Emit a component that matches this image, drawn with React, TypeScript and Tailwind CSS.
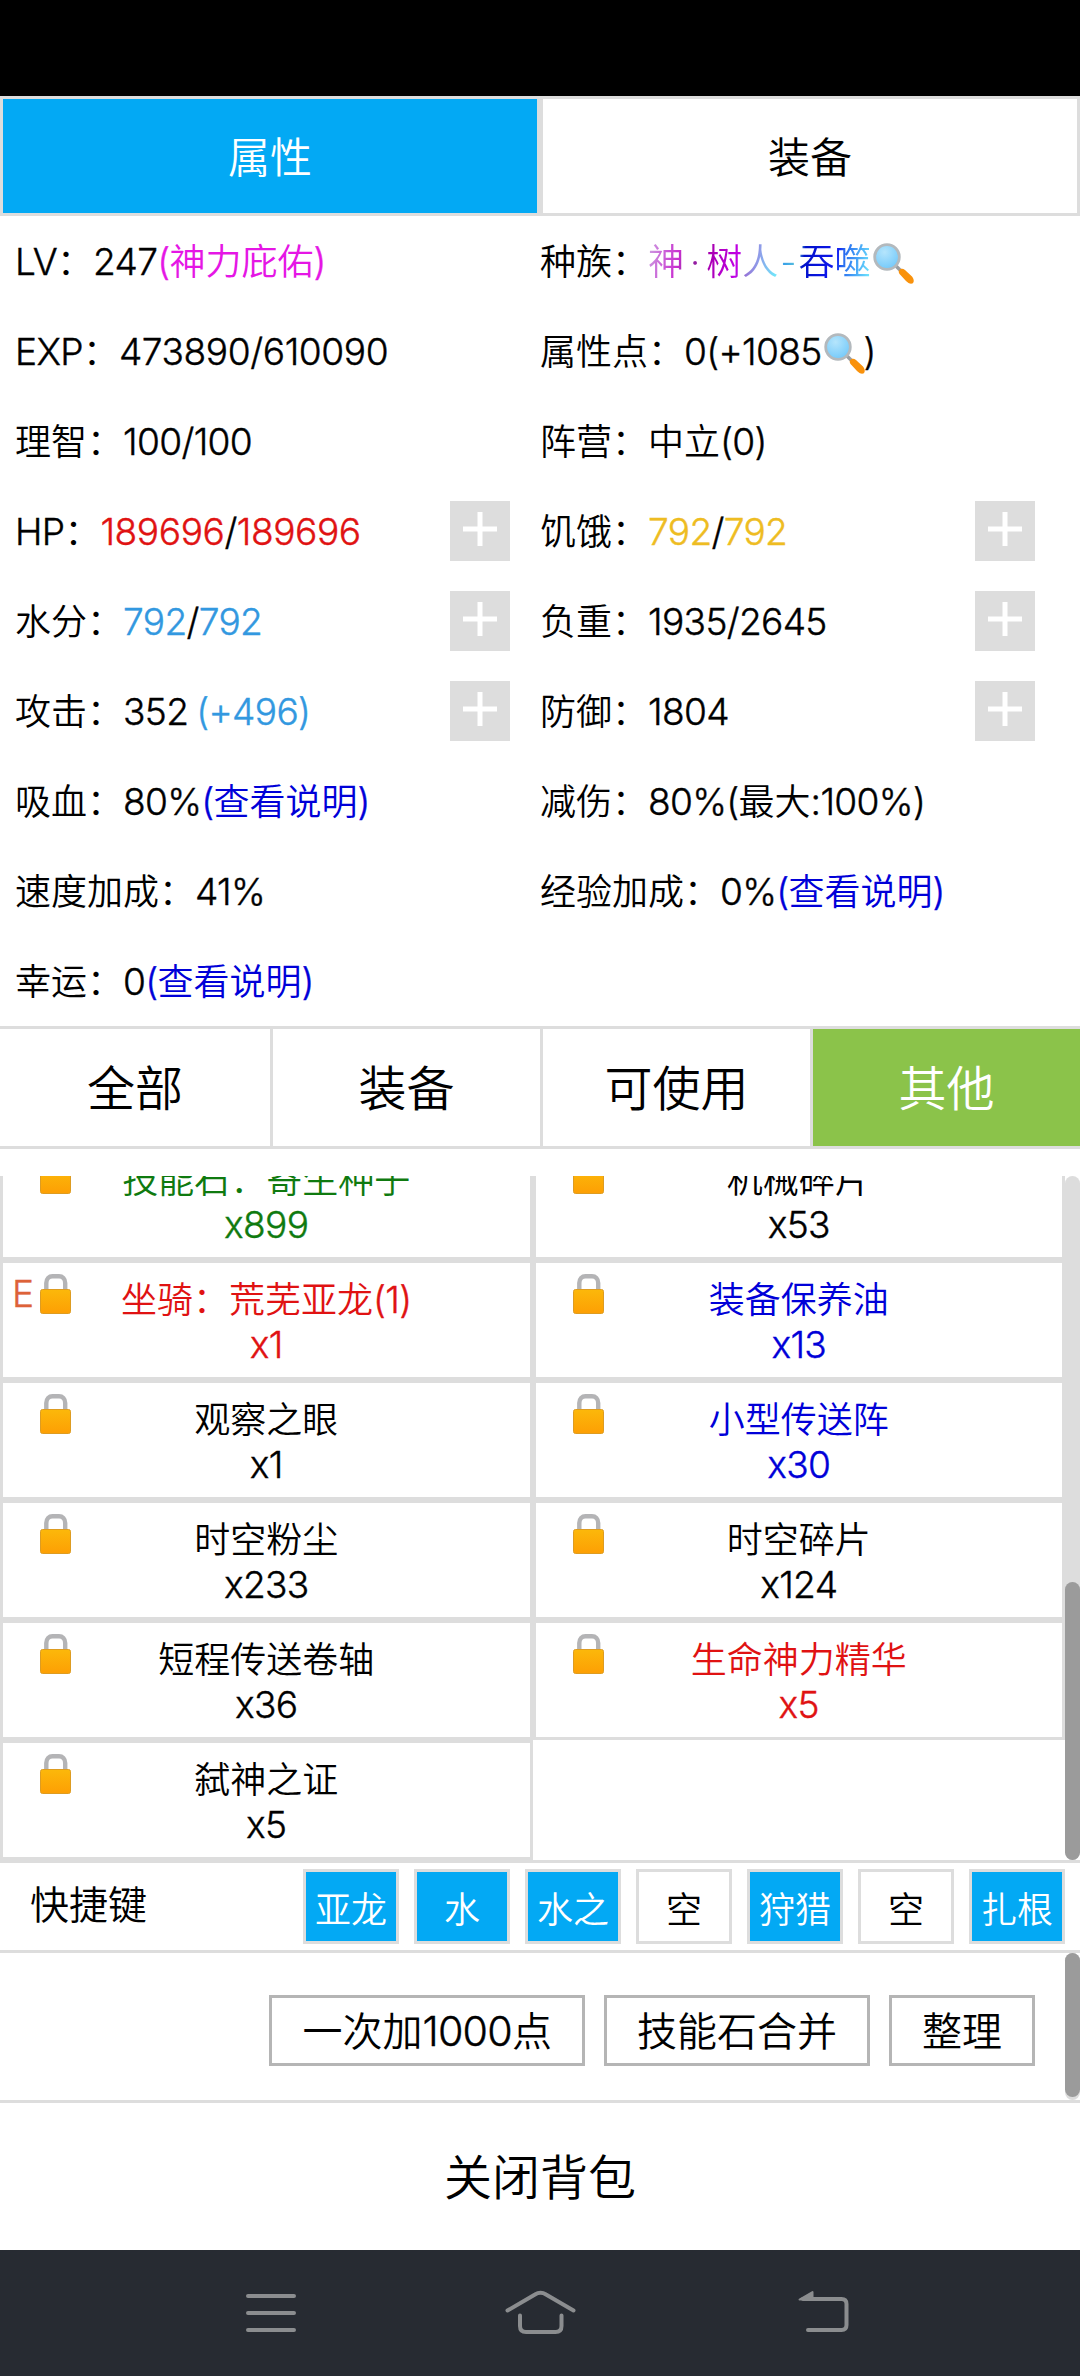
import React from "react";

/** Splits a string so that Latin letters and digits use a narrower geometric face. */
function T({ children, wide }: { children: string; wide?: boolean }) {
  const parts = children.split(/([\x21-\x7e]+)/).filter(Boolean);
  return (
    <>
      {parts.map((p, i) =>
        /^[\x21-\x7e]+$/.test(p) ? (
          <span
            key={i}
            className={`font-[Inter,sans-serif] text-[1.03em] leading-none font-[330] [-webkit-text-stroke:0.4px] ${wide ? "tracking-[-0.011em]" : "tracking-[-0.018em]"}`}
          >
            {p}
          </span>
        ) : (
          <React.Fragment key={i}>{p}</React.Fragment>
        ),
      )}
    </>
  );
}

function Magnifier() {
  return (
    <svg className="-mt-4 -mr-0.5 inline-block h-[42px] w-[44px] align-[-9px]" viewBox="0 0 44 42">
      <defs>
        <radialGradient id="lens" cx="0.4" cy="0.3" r="0.8">
          <stop offset="0" stopColor="#b5e5fc" />
          <stop offset="1" stopColor="#6cc6fa" />
        </radialGradient>
      </defs>
      <path d="M25 24L30 29" stroke="#9a9fa3" strokeWidth="3.5" />
      <path d="M28 28.5C29.500 26.500 31.500 26 34 28L41 34.500C43 37 43.500 40 41.500 41.500C39 42 37 41 35 39L29.500 33C28 31.500 27.300 30 28 28.500Z" fill="#f9920c" />
      <circle cx="16" cy="15" r="12.300" fill="url(#lens)" stroke="#b3b9bd" strokeWidth="2.800" />
    </svg>
  );
}

function Lock() {
  return (
    <svg className="absolute left-[37px] top-[11px] h-10 w-8" viewBox="0 0 32 40">
      <defs>
        <linearGradient id="lockBody" x1="0" y1="0" x2="0" y2="1">
          <stop offset="0" stopColor="#fcb80a" />
          <stop offset="1" stopColor="#fd9f04" />
        </linearGradient>
      </defs>
      <path d="M6.300 18V9C6.300 4.500 9 2.300 12.500 2.300H19C22.500 2.300 25.200 4.500 25.200 9V18" fill="none" stroke="#b4b4b6" strokeWidth="4.400" />
      <rect x="0.500" y="15.500" width="30" height="24" rx="2" fill="url(#lockBody)" stroke="#dd9c22" strokeWidth="1" />
    </svg>
  );
}

function Plus() {
  return (
    <div className="mr-[30px] flex size-[60px] shrink-0 items-center justify-center bg-[#ddd]">
      <svg className="mb-1 size-[34px]" viewBox="0 0 34 34">
        <path d="M17 0V34M0 17H34" stroke="#fff" strokeWidth="5" />
      </svg>
    </div>
  );
}

function Stat({ label, plus, children }: { label: string; plus?: boolean; children?: React.ReactNode }) {
  return (
    <div className="flex h-[90px] items-center justify-between whitespace-nowrap text-[36px] leading-[54px]">
      <div className="pb-[5px]">
        <T>{label}</T>：{children}
      </div>
      {plus && <Plus />}
    </div>
  );
}

const Link = () => (
  <span className="text-[#0000d8]">
    <T>(查看说明)</T>
  </span>
);

function Stats() {
  return (
    <div className="grid grid-cols-[525px_525px] pl-[15px]">
      <Stat label="LV">
        <T>247</T>
        <span className="text-[#e516e5]"><T>(神力庇佑)</T></span>
      </Stat>
      <Stat label="种族">
        <span className="bg-[linear-gradient(100deg,#cda5e2_0%,#c92fd0_15%,#8a2a9a_20%,#a800b0_28%,#c200e8_41%,#9860cf_43%,#8ea0ea_50%,#70e6fa_58%,#38a0e8_61%,#58c0dc_66%,#0010c8_69%,#1018f0_83%,#2468f0_86%,#78f4ff_100%)] bg-clip-text text-transparent">
          神<span className="px-[6px] font-[Inter,sans-serif] leading-none">·</span>树人<span className="px-[2px] font-[Inter,sans-serif] leading-none">-</span>吞噬
        </span>
        <Magnifier />
      </Stat>
      <Stat label="EXP"><T wide>473890/610090</T></Stat>
      <Stat label="属性点">
        <T>0(+1085</T>
        <Magnifier />
        <T>)</T>
      </Stat>
      <Stat label="理智"><T>100/100</T></Stat>
      <Stat label="阵营"><T>中立(0)</T></Stat>
      <Stat label="HP" plus>
        <span className="text-[#e01212]"><T wide>189696</T></span>
        <T>/</T>
        <span className="text-[#e01212]"><T wide>189696</T></span>
      </Stat>
      <Stat label="饥饿" plus>
        <span className="text-[#eebc22]"><T>792</T></span>
        <T>/</T>
        <span className="text-[#eebc22]"><T>792</T></span>
      </Stat>
      <Stat label="水分" plus>
        <span className="text-[#3298e0]"><T>792</T></span>
        <T>/</T>
        <span className="text-[#3298e0]"><T>792</T></span>
      </Stat>
      <Stat label="负重" plus><T>1935/2645</T></Stat>
      <Stat label="攻击" plus>
        <T>352</T> <span className="text-[#3298e0]"><T>(+496)</T></span>
      </Stat>
      <Stat label="防御" plus><T>1804</T></Stat>
      <Stat label="吸血"><T>80%</T><Link /></Stat>
      <Stat label="减伤"><T>80%(最大:100%)</T></Stat>
      <Stat label="速度加成"><T>41%</T></Stat>
      <Stat label="经验加成"><T>0%</T><Link /></Stat>
      <Stat label="幸运"><T>0</T><Link /></Stat>
    </div>
  );
}

type Item = { name: string; count: string; color?: string; equipped?: boolean };

const items: Item[] = [
  { name: "技能石：寄生种子", count: "x899", color: "text-[#0f7a0f]" },
  { name: "机械碎片", count: "x53" },
  { name: "坐骑：荒芜亚龙(1)", count: "x1", color: "text-[#e01212]", equipped: true },
  { name: "装备保养油", count: "x13", color: "text-[#0000d8]" },
  { name: "观察之眼", count: "x1" },
  { name: "小型传送阵", count: "x30", color: "text-[#0000d8]" },
  { name: "时空粉尘", count: "x233" },
  { name: "时空碎片", count: "x124" },
  { name: "短程传送卷轴", count: "x36" },
  { name: "生命神力精华", count: "x5", color: "text-[#e01212]" },
  { name: "弑神之证", count: "x5" },
];

function ItemCell({ item }: { item: Item }) {
  return (
    <div className={`relative h-[120px] border-3 border-[#ddd] pt-[12px] text-center text-[36px] leading-[45px] ${item.color ?? ""}`}>
      {item.equipped && (
        <span className="absolute left-[9px] top-[6px] leading-[45px] text-[#dd6238]">
          <T>E</T>
        </span>
      )}
      <Lock />
      <div><T>{item.name}</T></div>
      <div><T>{item.count}</T></div>
    </div>
  );
}

const filters = ["全部", "装备", "可使用", "其他"];
const shortcuts = ["亚龙", "水", "水之", "空", "狩猎", "空", "扎根"];
const actions = ["一次加1000点", "技能石合并", "整理"];

export default function App() {
  return (
    <div className="flex h-[2376px] w-[1080px] flex-col overflow-hidden bg-white font-['Noto_Sans_CJK_SC',sans-serif] font-[350] text-black">
      <div className="h-24 bg-black" />

      <div className="grid h-[120px] grid-cols-2 text-[42px]">
        <div className="flex items-center justify-center border-3 border-[#ddd] bg-[#03a9f4] pb-1 text-white">属性</div>
        <div className="flex items-center justify-center border-3 border-[#ddd] pb-1">装备</div>
      </div>

      <Stats />

      <div className="grid h-[123px] grid-cols-4 border-y-3 border-[#ddd] text-[48px]">
        {filters.map((f, i) => (
          <div
            key={f}
            className={`flex items-center justify-center border-[#ddd] pb-1.5 ${i > 0 ? "border-l-3" : ""} ${i === 3 ? "bg-[#8bc34a] text-white" : ""}`}
          >
            {f}
          </div>
        ))}
      </div>

      <div className="mt-[27px] flex h-[684px] overflow-hidden">
        <div className="-mt-9 grid w-[1065px] grid-cols-2 content-start">
          {items.map((it) => (
            <ItemCell key={it.name} item={it} />
          ))}
        </div>
        <div className="flex w-[15px] flex-col justify-end rounded-full bg-[#ddd]">
          <div className="h-[278px] rounded-full bg-[#9b9b9b]" />
        </div>
      </div>

      <div className="flex h-[93px] items-center justify-between border-y-3 border-[#ddd] pl-[30px] pr-[15px]">
        <div className="pb-2 text-[39px]">快捷键</div>
        <div className="flex gap-[15px]">
          {shortcuts.map((s, i) => (
            <div
              key={i}
              className={`flex h-[75px] w-24 items-center justify-center border-3 border-[#ddd] text-[36px] ${s === "空" ? "" : "bg-[#03a9f4] text-white"}`}
            >
              {s}
            </div>
          ))}
        </div>
      </div>

      <div className="flex h-[147px] justify-between">
        <div className="flex flex-1 items-start justify-end gap-[19px] pr-[30px] pt-[42px]">
          {actions.map((a) => (
            <div key={a} className="flex h-[71px] items-center border-3 border-[#b5b5b5] px-[30px] pb-1 text-[40px]">
              <span><T>{a}</T></span>
            </div>
          ))}
        </div>
        <div className="w-[15px] rounded-full bg-[#ddd]">
          <div className="h-36 rounded-full bg-[#9b9b9b]" />
        </div>
      </div>

      <div className="flex h-[150px] items-center justify-center border-t-3 border-[#ddd] pb-1.5 text-[48px]">关闭背包</div>

      <div className="flex h-[126px] items-center bg-[#272b32] pl-[244px]">
        <svg className="size-[54px]" viewBox="0 0 54 54" fill="none" stroke="#8b8d8f" strokeWidth="4" strokeLinecap="round">
          <path d="M4 10H50M4 27H50M4 44H50" />
        </svg>
        <svg className="ml-[204px] h-[54px] w-[76px]" viewBox="0 0 76 54" fill="none" stroke="#8b8d8f" strokeWidth="4" strokeLinecap="round">
          <path d="M5.500 24.500L33 8.500Q38.500 5 44 8.500L71.500 24.500M18 29.500V40Q18 46 24 46H53.500Q59.500 46 59.500 40V29.500" />
        </svg>
        <svg className="ml-[219px] size-[54px]" viewBox="0 0 54 54" fill="none" stroke="#8b8d8f" strokeWidth="4" strokeLinecap="round">
          <path d="M6 13H44.500Q49.500 13 49.500 18V39Q49.500 44 44.500 44H11" />
          <path d="M2.500 13.500L15.500 6V13Z" fill="#8b8d8f" strokeWidth="2" strokeLinejoin="round" />
        </svg>
      </div>
    </div>
  );
}
